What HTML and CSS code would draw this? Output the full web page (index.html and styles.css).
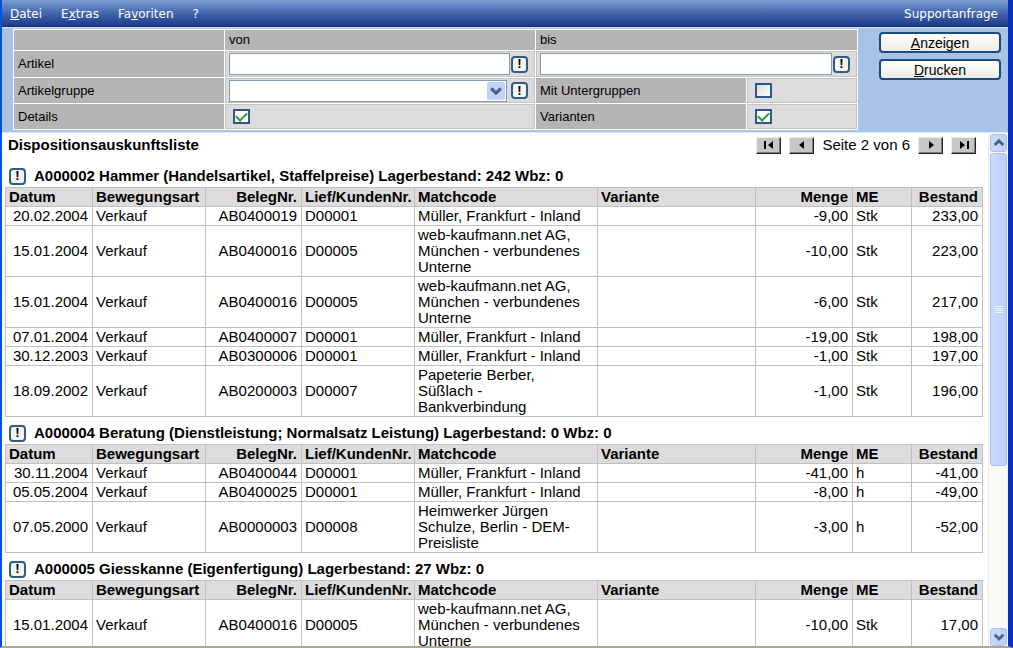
FILE: index.html
```html
<!DOCTYPE html>
<html lang="de">
<head>
  <meta charset="UTF-8" />
  <meta name="viewport" content="width=device-width, initial-scale=1.0"/>
  <title>Dispositionsauskunftsliste</title>
  <link rel="stylesheet" href="styles.css">
</head>
<body>
  <nav>
    <a href="#"><u>D</u>atei</a>
    <a href="#">E<u>x</u>tras</a>
    <a href="#">Fa<u>v</u>oriten</a>
    <a href="#">?</a>
    <a href="#" class="support">Supportanfrage</a>
  </nav>

  <form class="filter">
    <div class="fields">
      <div class="label"></div>
      <div class="label">von</div>
      <div class="label wide">bis</div>

      <label class="label" for="artikelVon">Artikel</label>
      <div class="value">
        <input type="text" id="artikelVon" />
        <button type="button" class="info" aria-label="Artikel von suchen">!</button>
      </div>
      <div class="value wide">
        <input type="text" id="artikelBis" aria-label="Artikel bis" />
        <button type="button" class="info" aria-label="Artikel bis suchen">!</button>
      </div>

      <label class="label" for="gruppe">Artikelgruppe</label>
      <div class="value">
        <div class="select">
          <select id="gruppe"><option></option></select>
          <svg viewBox="0 0 17 17"><path d="M4 6l4.500 4.500L13 6" /></svg>
        </div>
        <button type="button" class="info" aria-label="Artikelgruppe suchen">!</button>
      </div>
      <label class="label" for="untergruppen">Mit Untergruppen</label>
      <div class="value check"><input type="checkbox" id="untergruppen" /></div>

      <label class="label" for="details">Details</label>
      <div class="value check"><input type="checkbox" id="details" checked /></div>
      <label class="label" for="varianten">Varianten</label>
      <div class="value check"><input type="checkbox" id="varianten" checked /></div>
    </div>
    <div class="actions">
      <button type="button"><u>A</u>nzeigen</button>
      <button type="button"><u>D</u>rucken</button>
    </div>
  </form>

  <main>
    <div class="report">
      <header>
        <h1>Dispositionsauskunftsliste</h1>
        <div class="pager">
          <button type="button" aria-label="Erste Seite"><svg viewBox="0 0 12 10"><path d="M1 1h2v8H1zM10 1v8L5 5z" /></svg></button>
          <button type="button" aria-label="Vorherige Seite"><svg viewBox="0 0 12 10"><path d="M8 1v8L3 5z" /></svg></button>
          <span>Seite 2 von 6</span>
          <button type="button" aria-label="Nächste Seite"><svg viewBox="0 0 12 10"><path d="M4 1v8l5-4z" /></svg></button>
          <button type="button" aria-label="Letzte Seite"><svg viewBox="0 0 12 10"><path d="M2 1v8l5-4zM9 1h2v8H9z" /></svg></button>
        </div>
      </header>
      <div id="groups"></div>
    </div>
    <div class="scrollbar">
      <div class="arrow"><svg viewBox="0 0 17 17"><path d="M4 10.500L8.500 6l4.500 4.500" /></svg></div>
      <div class="track"><div class="thumb"><i></i><i></i><i></i><i></i></div></div>
      <div class="arrow"><svg viewBox="0 0 17 17"><path d="M4 6l4.500 4.500L13 6" /></svg></div>
    </div>
  </main>

<script>
  const inland = "Müller, Frankfurt - Inland";
  const webKaufmann = "web-kaufmann.net AG,<br>München - verbundenes<br>Unterne";

  // Datum, BelegNr., Lief/KundenNr., Matchcode, Menge, ME, Bestand
  const groups = [
    {
      title: "A000002 Hammer (Handelsartikel, Staffelpreise) Lagerbestand: 242 Wbz: 0",
      rows: [
        ["20.02.2004", "AB0400019", "D00001", inland, "-9,00", "Stk", "233,00"],
        ["15.01.2004", "AB0400016", "D00005", webKaufmann, "-10,00", "Stk", "223,00"],
        ["15.01.2004", "AB0400016", "D00005", webKaufmann, "-6,00", "Stk", "217,00"],
        ["07.01.2004", "AB0400007", "D00001", inland, "-19,00", "Stk", "198,00"],
        ["30.12.2003", "AB0300006", "D00001", inland, "-1,00", "Stk", "197,00"],
        ["18.09.2002", "AB0200003", "D00007", "Papeterie Berber,<br>Süßlach -<br>Bankverbindung", "-1,00", "Stk", "196,00"]
      ]
    },
    {
      title: "A000004 Beratung (Dienstleistung; Normalsatz Leistung) Lagerbestand: 0 Wbz: 0",
      rows: [
        ["30.11.2004", "AB0400044", "D00001", inland, "-41,00", "h", "-41,00"],
        ["05.05.2004", "AB0400025", "D00001", inland, "-8,00", "h", "-49,00"],
        ["07.05.2000", "AB0000003", "D00008", "Heimwerker Jürgen<br>Schulze, Berlin - DEM-<br>Preisliste", "-3,00", "h", "-52,00"]
      ]
    },
    {
      title: "A000005 Giesskanne (Eigenfertigung) Lagerbestand: 27 Wbz: 0",
      rows: [
        ["15.01.2004", "AB0400016", "D00005", webKaufmann, "-10,00", "Stk", "17,00"]
      ]
    }
  ];

  document.getElementById("groups").innerHTML = groups.map(g => `
    <h2><button type="button" class="info" aria-label="Artikelinfo">!</button>${g.title}</h2>
    <table>
      <colgroup>
        <col class="datum"><col class="art"><col class="beleg"><col class="kunde"><col class="match">
        <col><col class="menge"><col class="me"><col class="bestand">
      </colgroup>
      <thead>
        <tr>
          <th>Datum</th><th>Bewegungsart</th><th class="num">BelegNr.</th><th>Lief/KundenNr.</th>
          <th>Matchcode</th><th>Variante</th><th class="num">Menge</th><th>ME</th><th class="num">Bestand</th>
        </tr>
      </thead>
      <tbody>${g.rows.map(r => `
        <tr>
          <td class="num">${r[0]}</td><td>Verkauf</td><td class="num">${r[1]}</td><td>${r[2]}</td>
          <td>${r[3]}</td><td></td><td class="num">${r[4]}</td><td>${r[5]}</td><td class="num">${r[6]}</td>
        </tr>`).join("")}
      </tbody>
    </table>`).join("");
</script>

</body>
</html>
```
FILE: styles.css
```css
* {
  box-sizing: border-box;
}

body {
  margin: 0;
  height: 100vh;
  display: flex;
  flex-direction: column;
  overflow: hidden;
  border-left: 2px solid #0054e3;
  border-right: 5px solid #0831c4;
  border-bottom: 2px solid #aca899;
  background: white;
  font-family: 'Liberation Sans', Arial, sans-serif;
  font-size: 15px;
  line-height: 16px;
  color: black;
}

button, input, select {
  font: inherit;
  margin: 0;
  padding: 0;
}

nav {
  display: flex;
  align-items: center;
  gap: 19px;
  height: 27px;
  padding: 1px 10px 0 8px;
  background: linear-gradient(#7b9ed2, #4467ae 50%, #1d3b87);
  border-bottom: 1px solid #0f2a72;
  font-family: 'DejaVu Sans', Verdana, sans-serif;
  font-size: 12px;
}

nav a {
  color: white;
  text-decoration: none;
}

nav .support {
  margin-left: auto;
}

.filter {
  display: flex;
  justify-content: space-between;
  padding: 1px 7px 2px 11px;
  border-top: 1px solid #dce8f8;
  border-bottom: 1px solid #dce8f8;
  background: #a8c3e6;
  font-size: 13px;
}

.fields {
  flex: 0 1 845px;
  display: grid;
  grid-template-columns: 210fr 310fr 210fr 110fr;
  grid-template-rows: 20px 26px 25px 25px;
  gap: 1px;
  padding: 1px;
  background: white;
}

.label, .value {
  display: flex;
  align-items: center;
  padding: 0 4px;
  border: 1px solid #c4c4c4;
}

.label {
  background: #b5b5b5;
  border-color: #b5b5b5;
  padding: 0 3px;
}

.value {
  background: #dcdcdc;
  gap: 1px;
  padding: 0 6px 0 3px;
}

.wide {
  grid-column: span 2;
}

.value input[type=text], .select {
  flex: 1;
  min-width: 0;
  height: 22px;
  border: 1px solid #7f9db9;
  background: white;
}

.select {
  display: flex;
  align-items: center;
  margin-right: 3px;
}

.select select {
  flex: 1;
  height: 18px;
  border: 0;
  appearance: none;
  background: white;
}

.select svg {
  width: 18px;
  height: 18px;
  margin-right: 1px;
  border-radius: 2px;
  background: #c2d3fc;
}

svg {
  display: block;
}

.select path, .arrow path {
  fill: none;
  stroke: #4d6185;
  stroke-width: 3;
}

.info {
  flex: none;
  width: 17px;
  height: 17px;
  border: 2px solid #2f5c88;
  border-radius: 4px;
  background: #f6f5f0;
  color: black;
  font-weight: bold;
  font-size: 13px;
  line-height: 12px;
}

.check {
  padding: 0 7px;
}

.check input {
  appearance: none;
  width: 17px;
  height: 15px;
  border: 2px solid #2a5a88;
  background: linear-gradient(135deg, #dcdcd7, white);
  display: grid;
  place-items: center;
}

.check input:checked {
  background: white;
}

.check input:checked::before {
  content: "";
  width: 9px;
  height: 5px;
  border-left: 2px solid #21a121;
  border-bottom: 2px solid #21a121;
  transform: translateY(-1px) rotate(-45deg);
}

.actions {
  display: flex;
  flex-direction: column;
  gap: 6px;
  width: 122px;
  padding-top: 3px;
}

.actions button {
  height: 21px;
  border: 2px solid #1c4a7c;
  border-radius: 4px;
  background: linear-gradient(white, #ecebe5);
  color: black;
  font-size: 14px;
  line-height: 16px;
}

main {
  flex: 1;
  min-height: 0;
  display: flex;
}

.report {
  flex: 1;
  padding: 0 5px 0 3px;
  overflow: hidden;
}

.report header {
  display: flex;
  justify-content: space-between;
  align-items: center;
  height: 24px;
  margin-bottom: 3px;
  padding: 0 7px 0 3px;
}

h1, h2 {
  margin: 0;
  font-size: 15px;
  font-weight: bold;
}

h2 {
  display: flex;
  align-items: center;
  gap: 8px;
  height: 27px;
  padding: 5px 4px 0;
}

.pager {
  display: flex;
  align-items: center;
  gap: 8px;
}

.pager button {
  width: 25px;
  height: 17px;
  display: grid;
  place-items: center;
  border: 1px solid;
  border-color: #eee #222 #222 #eee;
  box-shadow: inset -1px -1px #808080;
  background: #c6c6c6;
}

.pager svg {
  width: 12px;
  height: 10px;
}

table {
  width: 100%;
  table-layout: fixed;
  border-collapse: collapse;
}

th, td {
  border: 1px solid #c0c0c0;
  padding: 1px 3px;
  text-align: left;
  white-space: nowrap;
}

th {
  background: #dcdcdc;
}

.num {
  padding-right: 4px;
  text-align: right;
}

.datum { width: 87px; }
.art { width: 113px; }
.beleg { width: 96px; }
.kunde { width: 113px; }
.match { width: 183px; }
.menge { width: 97px; }
.me { width: 59px; }
.bestand { width: 71px; }

.scrollbar {
  display: flex;
  flex-direction: column;
  width: 20px;
  padding: 1px 1px 0;
  border-left: 1px solid #eeede5;
  background: #fbfaf6;
}

.arrow, .thumb {
  border: 1px solid #a9bff0;
  border-radius: 3px;
  background: linear-gradient(90deg, #cbdafd, #bccefa);
}

.arrow svg {
  width: 16px;
  height: 16px;
}

.track {
  flex: 1;
  padding: 1px 0;
}

.thumb {
  height: 66%;
  display: flex;
  flex-direction: column;
  align-items: center;
  justify-content: center;
  gap: 1px;
}

.thumb i {
  width: 8px;
  height: 1px;
  background: #eef4fe;
}
```
